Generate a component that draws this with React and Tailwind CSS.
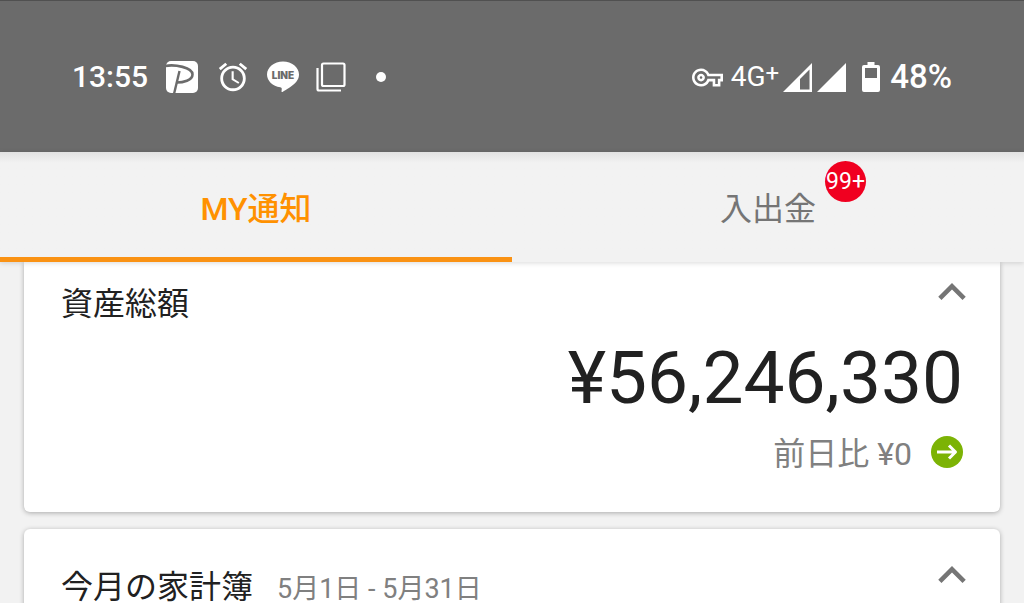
import { useState } from "react";
import { MdAlarm, MdOutlineVpnKey } from "react-icons/md";

const PayIcon = () => (
  <svg width="34" height="34" viewBox="0 0 34 34" aria-hidden="true">
    <rect x="1" y="1" width="32" height="32" rx="5" fill="#fff" />
    <path d="M0 6C10 4 27.500 7.500 27.500 14.500C27.500 20.500 18 22.500 11.500 22.500" fill="none" stroke="#6b6b6b" strokeWidth="2.600" />
    <path d="M14.500 11L9 34" fill="none" stroke="#6b6b6b" strokeWidth="2.400" />
  </svg>
);

const LineIcon = () => (
  <svg width="32" height="32" viewBox="0 0 32 32" aria-hidden="true">
    <path d="M16 0.500C7.200 0.500 0 6.300 0 13.500C0 19.900 5.700 25.200 13.300 26.300C15.200 26.700 14.900 27.700 14.500 30.300C14.400 31 14.800 31.300 15.500 30.900C19 29 26.500 24.500 29.500 20.500C31.200 18.400 32 16 32 13.500C32 6.300 24.800 0.500 16 0.500Z" fill="#fff" />
    <text x="16" y="17.500" textAnchor="middle" fontSize="10" fontWeight="900" fontFamily="Inter, sans-serif" fill="#6b6b6b">LINE</text>
  </svg>
);

const CopiesIcon = () => (
  <svg width="30" height="30" viewBox="0 0 30 30" fill="none" stroke="#fff" strokeWidth="2.200" aria-hidden="true">
    <rect x="6" y="1.500" width="22.500" height="22.500" rx="1.500" />
    <path d="M1.500 6V27Q1.500 28.500 3 28.500H25" />
  </svg>
);

const SignalIcon = ({ weak }) => (
  <svg width="29" height="29" viewBox="0 0 29 29" aria-hidden="true">
    <path d="M0 29L29 0V29Z" fill="#fff" />
    {weak && <path d="M17 16L26.500 6.500V26.500H17Z" fill="#6b6b6b" />}
  </svg>
);

const BatteryIcon = () => (
  <svg width="18" height="30" viewBox="0 0 18 30" aria-hidden="true">
    <path d="M5.500 0H12.500V3H16Q18 3 18 5V28Q18 30 16 30H2Q0 30 0 28V5Q0 3 2 3H5.500Z" fill="#fff" />
    <rect x="3" y="6" width="12" height="10" fill="#6b6b6b" />
  </svg>
);

const ChevronUp = () => (
  <svg width="28" height="17" viewBox="6 8 12 7.410" aria-hidden="true">
    <path d="M12 8l-6 6 1.410 1.410L12 10.830l4.590 4.580L18 14z" fill="#757575" />
  </svg>
);

const ArrowBadge = () => (
  <svg width="32" height="32" viewBox="0 0 32 32" aria-hidden="true">
    <circle cx="16" cy="16" r="16" fill="#7cb305" />
    <path d="M6 16H24.500M18 9.500L24.500 16L18 22.500" fill="none" stroke="#fff" strokeWidth="3" strokeLinejoin="round" />
  </svg>
);

const StatusBar = () => (
  <header className="flex h-[152px] shrink-0 items-center justify-between border-t border-[#505050] bg-[#6b6b6b] px-[72px] pt-px text-white">
    <div className="flex items-center">
      <span className="text-[30px] leading-9 font-medium">13:55</span>
      <div className="ml-[17px] flex items-center gap-[17px]">
        <PayIcon />
        <MdAlarm size={34} />
        <LineIcon />
        <CopiesIcon />
      </div>
      <span className="ml-[30px] size-[10px] rounded-full bg-white" />
    </div>
    <div className="flex items-center">
      <MdOutlineVpnKey size={31} />
      <span className="ml-2 flex text-[28px] leading-9">
        4G<sup className="top-0 text-[24px] leading-7">+</sup>
      </span>
      <div className="ml-1 flex gap-[5px]">
        <SignalIcon weak />
        <SignalIcon />
      </div>
      <div className="ml-4 flex items-center gap-[10px]">
        <BatteryIcon />
        <span className="text-[33px] leading-9 font-medium">48%</span>
      </div>
    </div>
  </header>
);

const TabBar = ({ active, onChange }) => {
  const tabs = [
    { id: "notice", label: "MY通知" },
    { id: "transfer", label: "入出金", badge: "99+" },
  ];

  return (
    <nav role="tablist" className="relative z-10 grid h-[110px] shrink-0 grid-cols-2 bg-linear-to-b from-[#e2e2e2] to-[#f2f2f2] to-10% shadow-[0_1px_5px_rgba(0,0,0,0.15)]">
      {tabs.map((tab) => (
        <button
          key={tab.id}
          type="button"
          role="tab"
          aria-selected={active === tab.id}
          onClick={() => onChange(tab.id)}
          className={`flex items-center justify-center border-b-[5px] pt-2 text-[32px] leading-10 ${
            active === tab.id
              ? "border-[#fa9214] font-medium text-[#ff9100]"
              : "border-transparent text-[#757575]"
          }`}
        >
          <span className="relative">
            {tab.label}
            {tab.badge && (
              <span className="absolute -top-7 left-full ml-[9px] flex size-[41px] items-center justify-center rounded-full bg-[#f00020] pt-[2px] text-[23px] leading-7 text-white">
                {tab.badge}
              </span>
            )}
          </span>
        </button>
      ))}
    </nav>
  );
};

const App = () => {
  const [active, setActive] = useState("notice");

  return (
    <div className="flex h-screen flex-col overflow-hidden bg-[#f2f2f2] font-[Roboto,'Noto_Sans_CJK_JP',sans-serif]">
      <StatusBar />
      <TabBar active={active} onChange={setActive} />

      <main className="flex flex-1 flex-col gap-[17px] overflow-hidden px-6">
        <section className="shrink-0 rounded-b-md bg-white px-[37px] pt-5 pb-9 shadow-[0_1px_5px_rgba(0,0,0,0.3)]">
          <div className="flex items-start justify-between">
            <h2 className="text-[32px] leading-11 text-[#212121]">資産総額</h2>
            <button type="button" aria-label="資産総額を閉じる" className="-mr-[3px] pt-px">
              <ChevronUp />
            </button>
          </div>
          <p className="mt-2 text-right text-[73px] leading-22 text-[#212121]">¥56,246,330</p>
          <div className="mt-[10px] flex items-start justify-end gap-[19px]">
            <p className="text-[32px] leading-11 text-[#808080]">前日比 ¥0</p>
            <a href="#assets" aria-label="資産の詳細" className="pt-1">
              <ArrowBadge />
            </a>
          </div>
        </section>

        <section className="shrink-0 rounded-md bg-white px-[37px] pt-9 pb-9 shadow-[0_1px_5px_rgba(0,0,0,0.3)]">
          <div className="flex items-start justify-between">
            <div className="flex items-baseline gap-6">
              <h2 className="text-[32px] leading-11 text-[#212121]">今月の家計簿</h2>
              <p className="text-[27px] leading-11 text-[#808080]">5月1日 - 5月31日</p>
            </div>
            <button type="button" aria-label="今月の家計簿を閉じる" className="-mr-[3px] pt-px">
              <ChevronUp />
            </button>
          </div>
        </section>
      </main>
    </div>
  );
};

export default App;
